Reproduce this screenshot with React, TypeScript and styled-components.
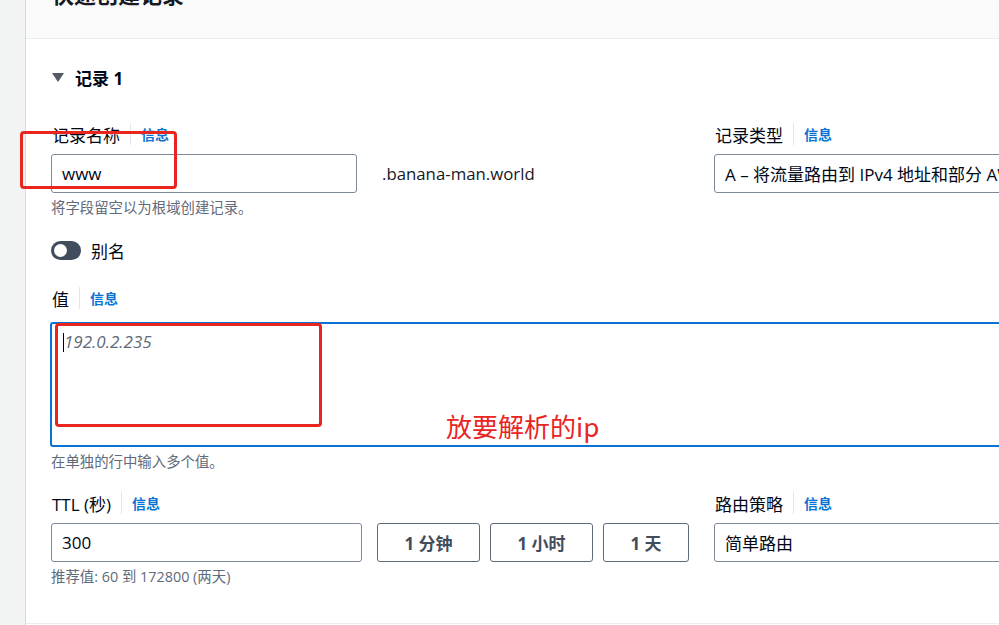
import React from "react";
import styled, { createGlobalStyle } from "styled-components";

const GlobalStyle = createGlobalStyle`
  html, body {
    margin: 0;
    padding: 0;
    overflow: hidden;
    background: #ffffff;
  }
  body {
    font-family: "Open Sans", "Noto Sans CJK SC", sans-serif;
    color: #000716;
  }
`;

const Page = styled.div`
  display: flex;
  width: 999px;
  height: 625px;
  overflow: hidden;
`;

const SideStrip = styled.div`
  flex: 0 0 25px;
  background: #f2f3f3;
  border-right: 1px solid #d5dbdb;
`;

const Panel = styled.div`
  position: relative;
  flex: 0 0 1150px;
  background: #ffffff;
  border-bottom: 1px solid #eaeded;
  height: 624px;
  box-sizing: border-box;
`;

const Header = styled.div`
  height: 39px;
  box-sizing: border-box;
  display: flex;
  align-items: flex-end;
  padding: 0 0 30px 26px;
  background: #fafafa;
  border-bottom: 1px solid #eaeded;
  overflow: hidden;
`;

const Title = styled.h2`
  margin: 0;
  font-size: 22px;
  line-height: 28px;
  font-weight: 700;
  color: #16191f;
`;

const Body = styled.div`
  padding: 0 0 0 25px;
`;

const RecordHead = styled.div`
  display: flex;
  align-items: center;
  gap: 11px;
  height: 24px;
  margin: 26px 0 33px 0;
  font-size: 17px;
  font-weight: 700;
`;

const Caret = styled.span`
  width: 0;
  height: 0;
  margin-left: 1px;
  border-left: 6px solid transparent;
  border-right: 6px solid transparent;
  border-top: 9px solid #545b64;
`;

const Columns = styled.div`
  display: grid;
  grid-template-columns: 638px 1fr;
  column-gap: 25px;
`;

const Field = styled.div<{ $top?: number }>`
  display: flex;
  flex-direction: column;
  margin-top: ${(p) => p.$top ?? 0}px;
`;

const LabelRow = styled.div`
  display: flex;
  align-items: center;
  height: 24px;
  margin: 0 0 8px 1px;
  font-size: 17px;
`;

const Divider = styled.span`
  width: 1px;
  height: 22px;
  background: #e2e5e9;
  margin: 0 10px 0 10px;
`;

const InfoLink = styled.a`
  color: #0972d3;
  font-size: 14px;
  font-weight: 700;
  text-decoration: none;
`;

const InputRow = styled.div`
  display: flex;
  align-items: center;
  gap: 10px;
`;

const TextBox = styled.div<{ $width?: number }>`
  box-sizing: border-box;
  width: ${(p) => (p.$width ? `${p.$width}px` : "auto")};
  flex: ${(p) => (p.$width ? "0 0 auto" : "1")};
  height: 39px;
  padding: 0 10px;
  display: flex;
  align-items: center;
  border: 1px solid #7d8998;
  border-radius: 3px;
  font-size: 17px;
  white-space: nowrap;
  overflow: hidden;
`;

const Suffix = styled.span`
  margin-left: 15px;
  font-size: 16.8px;
  color: #16191f;
`;

const Hint = styled.div`
  margin-top: 5px;
  font-size: 14.4px;
  line-height: 20px;
  color: #5f6b7a;
`;

const ToggleRow = styled.div`
  display: flex;
  align-items: center;
  gap: 10px;
  margin: 23px 0 0 0;
  height: 19px;
  font-size: 17px;
`;

const Toggle = styled.span`
  position: relative;
  width: 30px;
  height: 19px;
  border-radius: 10px;
  background: #414d5c;

  &::after {
    content: "";
    position: absolute;
    left: 3px;
    top: 3px;
    width: 13px;
    height: 13px;
    border-radius: 50%;
    background: #ffffff;
  }
`;

const TextArea = styled.div`
  box-sizing: border-box;
  height: 125px;
  margin: 4px 0 0 -1px;
  padding: 7px 11px;
  border: 2px solid #0972d3;
  border-radius: 3px;
  display: flex;
  align-items: flex-start;
`;

const Cursor = styled.span`
  width: 1px;
  height: 19px;
  background: #000;
  margin-top: 2px;
`;

const Placeholder = styled.span`
  font-size: 17px;
  font-style: italic;
  color: #5f6b7a;
  line-height: 22px;
`;

const QuickButton = styled.button<{ $width: number; $lead?: number }>`
  box-sizing: border-box;
  width: ${(p) => p.$width}px;
  margin-left: ${(p) => p.$lead ?? 0}px;
  height: 39px;
  border: 1px solid #5f6b7a;
  border-radius: 3px;
  background: #ffffff;
  color: #414d5c;
  font-family: "Open Sans", "Noto Sans CJK SC", sans-serif;
  font-size: 17px;
  font-weight: 700;
  padding: 0;
`;

const Mark = styled.div<{ $x: number; $y: number; $w: number; $h: number }>`
  position: absolute;
  left: ${(p) => p.$x}px;
  top: ${(p) => p.$y}px;
  width: ${(p) => p.$w}px;
  height: ${(p) => p.$h}px;
  box-sizing: border-box;
  border: 3.5px solid #e8251f;
  border-radius: 4px;
  pointer-events: none;
`;

const Note = styled.span`
  position: absolute;
  left: 420px;
  top: 409px;
  font-family: "Noto Sans CJK SC", sans-serif;
  font-size: 26px;
  line-height: 34px;
  color: #e8251f;
`;

const Info = () => (
  <>
    <Divider />
    <InfoLink href="#">信息</InfoLink>
  </>
);

export default function App() {
  return (
    <Page>
      <GlobalStyle />
      <SideStrip />
      <Panel>
        <Header>
          <Title>快速创建记录</Title>
        </Header>
        <Body>
          <RecordHead>
            <Caret />
            记录 1
          </RecordHead>

          <Columns>
            <Field>
              <LabelRow>
                记录名称
                <Info />
              </LabelRow>
              <InputRow>
                <TextBox $width={306}>www</TextBox>
                <Suffix>.banana-man.world</Suffix>
              </InputRow>
              <Hint>将字段留空以为根域创建记录。</Hint>
            </Field>
            <Field>
              <LabelRow>
                记录类型
                <Info />
              </LabelRow>
              <TextBox $width={420}>A – 将流量路由到 IPv4 地址和部分 AWS 资源</TextBox>
            </Field>
          </Columns>

          <ToggleRow>
            <Toggle />
            别名
          </ToggleRow>

          <Field $top={26}>
            <LabelRow>
              值
              <Info />
            </LabelRow>
            <TextArea>
              <Cursor />
              <Placeholder>192.0.2.235</Placeholder>
            </TextArea>
            <Hint>在单独的行中输入多个值。</Hint>
          </Field>

          <Columns>
            <Field $top={19}>
              <LabelRow>
                TTL (秒)
                <Info />
              </LabelRow>
              <InputRow>
                <TextBox>300</TextBox>
                <QuickButton $width={103} $lead={5}>1 分钟</QuickButton>
                <QuickButton $width={103}>1 小时</QuickButton>
                <QuickButton $width={86}>1 天</QuickButton>
              </InputRow>
              <Hint>推荐值: 60 到 172800 (两天)</Hint>
            </Field>
            <Field $top={19}>
              <LabelRow>
                路由策略
                <Info />
              </LabelRow>
              <TextBox $width={420}>简单路由</TextBox>
            </Field>
          </Columns>
        </Body>

        <Mark $x={-6} $y={131} $w={157} $h={58} />
        <Mark $x={29} $y={323} $w={267} $h={104} />
        <Note>放要解析的ip</Note>
      </Panel>
    </Page>
  );
}
